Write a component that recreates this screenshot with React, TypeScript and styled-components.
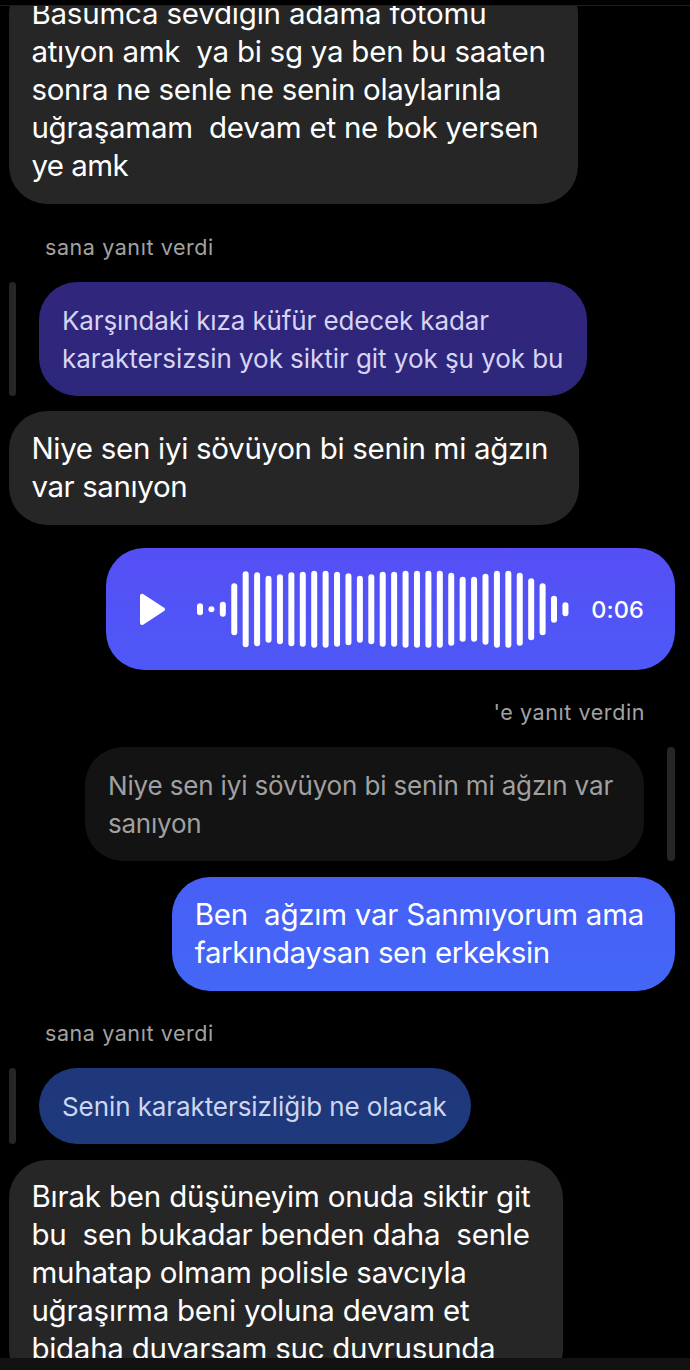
import React from 'react';
import styled, { createGlobalStyle } from 'styled-components';

type Side = 'left' | 'right';

const GlobalStyle = createGlobalStyle`
  body {
    margin: 0;
    background: #000;
    color: #fff;
    font-family: Inter, "Noto Sans", sans-serif;
  }
`;

const Screen = styled.main`
  display: flex;
  flex-direction: column;
  width: 690px;
  height: 1370px;
  overflow: hidden;
  background: #000;
`;

const HeaderEdge = styled.header`
  flex: none;
  box-sizing: border-box;
  height: 6px;
  border-bottom: 1px solid #1e1e1e;
`;

const Thread = styled.section`
  flex: 1;
  min-height: 0;
  overflow: hidden;
  display: flex;
  flex-direction: column;
  padding: 0 15px 0 9px;
`;

const ComposerEdge = styled.footer`
  flex: none;
  height: 12px;
  background: #121212;
`;

const Bubble = styled.div<{ $w: number; $bg: string; $side?: Side; $gap?: number; $top?: number }>`
  flex: none;
  box-sizing: border-box;
  align-self: ${(p) => (p.$side === 'right' ? 'flex-end' : 'flex-start')};
  width: ${(p) => p.$w}px;
  margin-top: ${(p) => p.$gap ?? 0}px;
  padding: ${(p) => p.$top ?? 18}px 0 20px 22.4px;
  border-radius: 38px;
  background: ${(p) => p.$bg};
  font-size: 29.5px;
  line-height: 38px;
`;

const QuotedBubble = styled(Bubble)<{ $color: string }>`
  padding: 20px 0 18px 23px;
  color: ${(p) => p.$color};
  font-size: 26px;
`;

const Line = styled.div<{ $track: number }>`
  white-space: pre;
  letter-spacing: ${(p) => p.$track}px;
`;

const ReplyLabel = styled.div<{ $side?: Side; $top?: number; $h: number }>`
  flex: none;
  box-sizing: border-box;
  height: ${(p) => p.$h}px;
  padding: ${(p) => p.$top ?? 29}px 30px 0 36px;
  color: #a2a2a2;
  font-size: 21.5px;
  line-height: 26px;
  letter-spacing: 0.58px;
  text-align: ${(p) => p.$side ?? 'left'};
`;

const Quote = styled.div<{ $side?: Side }>`
  flex: none;
  display: flex;
  gap: 23px;
  justify-content: ${(p) => (p.$side === 'right' ? 'flex-end' : 'flex-start')};
`;

const QuoteBar = styled.span<{ $w?: number }>`
  width: ${(p) => p.$w ?? 7}px;
  border-radius: 4px;
  background: #262626;
`;

const VoiceBubble = styled.div`
  flex: none;
  align-self: flex-end;
  box-sizing: border-box;
  display: flex;
  align-items: center;
  width: 569px;
  height: 122px;
  margin-top: 23px;
  padding: 0 31px 0 33px;
  border-radius: 38px;
  background: linear-gradient(#554ff5, #4e58f7);
`;

const PlayIcon = styled.svg`
  flex: none;
  width: 28px;
  height: 34px;
`;

const Waveform = styled.svg`
  flex: none;
  width: 374px;
  height: 80px;
  margin-left: 29px;
`;

const Duration = styled.span`
  margin-left: auto;
  font-size: 23.5px;
  font-weight: 500;
  letter-spacing: 0.15px;
`;

const levels = [
  12, 6, 15, 52, 76, 74, 67, 70, 74, 75, 77, 77, 75, 72, 67, 70, 75,
  75, 77, 77, 77, 77, 73, 65, 65, 71, 77, 77, 73, 62, 52, 27, 14,
];
const barStep = 11.42;

type TextLine = [string, number];

const Lines = ({ items }: { items: TextLine[] }) => (
  <>
    {items.map(([text, track]) => (
      <Line key={text} $track={track}>{text}</Line>
    ))}
  </>
);

export default function App() {
  return (
    <Screen>
      <GlobalStyle />
      <HeaderEdge />
      <Thread>
        <Bubble $w={568.6} $bg="#262626" $gap={-30}>
          <Lines
            items={[
              ['Basumca sevdiğin adama fotomu', -0.21],
              ['atıyon amk  ya bi sg ya ben bu saaten', -0.252],
              ['sonra ne senle ne senin olaylarınla', -0.282],
              ['uğraşamam  devam et ne bok yersen', -0.232],
              ['ye amk', -0.55],
            ]}
          />
        </Bubble>

        <ReplyLabel $h={78} $top={30}>sana yanıt verdi</ReplyLabel>
        <Quote>
          <QuoteBar />
          <QuotedBubble $w={548} $bg="linear-gradient(#31267d, #2d277b)" $color="#d7d4f3">
            <Lines
              items={[
                ['Karşındaki kıza küfür edecek kadar', -0.128],
                ['karaktersizsin yok siktir git yok şu yok bu', -0.05],
              ]}
            />
          </QuotedBubble>
        </Quote>

        <Bubble $w={570.4} $bg="#262626" $gap={15}>
          <Lines
            items={[
              ['Niye sen iyi sövüyon bi senin mi ağzın', -0.3],
              ['var sanıyon', -0.4],
            ]}
          />
        </Bubble>

        <VoiceBubble>
          <PlayIcon viewBox="0 0 28 34" aria-label="Oynat">
            <path
              d="M3 3.8V31L24 17.4Z"
              fill="#fff"
              stroke="#fff"
              strokeWidth="4"
              strokeLinejoin="round"
            />
          </PlayIcon>
          <Waveform viewBox="0 0 374 80">
            {levels.map((h, i) => (
              <rect key={i} x={1 + i * barStep} y={40.3 - h / 2} width="6" height={h} rx="3" fill="#fff" />
            ))}
          </Waveform>
          <Duration>0:06</Duration>
        </VoiceBubble>

        <ReplyLabel $h={77} $side="right">'e yanıt verdin</ReplyLabel>
        <Quote $side="right">
          <QuotedBubble $w={559} $bg="#131313" $color="#a0a0a0">
            <Lines
              items={[
                ['Niye sen iyi sövüyon bi senin mi ağzın var', -0.156],
                ['sanıyon', -0.229],
              ]}
            />
          </QuotedBubble>
          <QuoteBar $w={8} />
        </Quote>

        <Bubble $w={502.6} $bg="linear-gradient(#475ff6, #4367f7)" $side="right" $gap={16}>
          <Lines
            items={[
              ['Ben  ağzım var Sanmıyorum ama', -0.245],
              ['farkındaysan sen erkeksin', -0.375],
            ]}
          />
        </Bubble>

        <ReplyLabel $h={77}>sana yanıt verdi</ReplyLabel>
        <Quote>
          <QuoteBar />
          <QuotedBubble $w={432} $bg="linear-gradient(#1f377b, #1e3a7b)" $color="#ccd6f2">
            <Lines items={[['Senin karaktersizliğib ne olacak', -0.09]]} />
          </QuotedBubble>
        </Quote>

        <Bubble $w={553.5} $bg="#262626" $gap={16} $top={17}>
          <Lines
            items={[
              ['Bırak ben düşüneyim onuda siktir git', -0.18],
              ['bu  sen bukadar benden daha  senle', -0.235],
              ['muhatap olmam polisle savcıyla', -0.215],
              ['uğraşırma beni yoluna devam et', -0.255],
              ['bidaha duyarsam suç duyrusunda', -0.263],
            ]}
          />
        </Bubble>
      </Thread>
      <ComposerEdge />
    </Screen>
  );
}
